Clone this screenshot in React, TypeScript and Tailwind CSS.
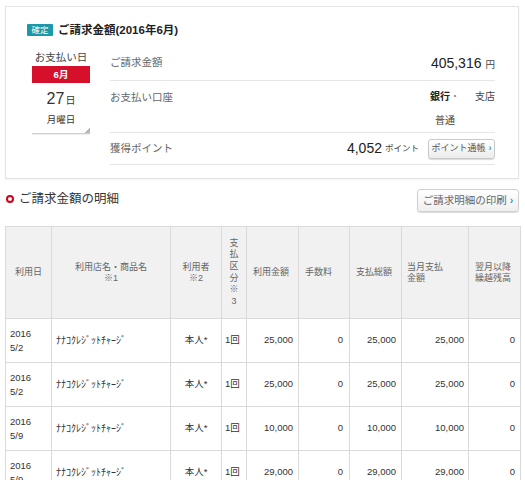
import React from "react";

const rows = [
  { y: "2016", d: "5/2", amt: "25,000" },
  { y: "2016", d: "5/2", amt: "25,000" },
  { y: "2016", d: "5/9", amt: "10,000" },
  { y: "2016", d: "5/9", amt: "29,000" },
];

function Chevron() {
  return <span className="text-[#2aa0b5] font-bold ml-[3px]">›</span>;
}

export default function App() {
  return (
    <div className="w-[525px] h-[480px] overflow-hidden bg-white font-['Liberation_Sans','Noto_Sans_CJK_JP',sans-serif] text-[#333]">
      <div className="pt-[6px] pl-[5px] pr-[5px]">
        {/* summary card */}
        <div className="w-[514px] h-[173px] border border-[#e4e4e4] shadow-[0_1px_2px_rgba(0,0,0,0.05)] pl-[21px] pt-[17px]">
          <div className="flex items-center h-[12px]">
            <span className="bg-[#1c98a8] text-white text-[8.5px] leading-[12px] w-[26px] text-center rounded-[1px]">確定</span>
            <span className="ml-[5px] text-[11.5px] leading-[14px] font-bold text-[#222]">ご請求金額(2016年6月)</span>
          </div>
          <div className="flex mt-[10px]">
            {/* date column */}
            <div className="ml-[5px] w-[58px] flex flex-col">
              <div className="mt-[4px] text-[10.5px] leading-[14px] text-center text-[#444]">お支払い日</div>
              <div className="mt-[2px] h-[17px] bg-[#d60f2b] text-white text-[9.5px] font-bold leading-[17px] text-center">6月</div>
              <div className="mt-[6px] h-[20px] flex items-baseline justify-center text-[#333]">
                <span className="text-[16px] leading-[20px]">27</span>
                <span className="text-[10px] ml-[1px]">日</span>
              </div>
              <div className="mt-[4px] text-[9.5px] leading-[14px] text-center text-[#333]">月曜日</div>
              <div className="relative mt-[3px] h-[4px] border-b border-[#cfcfcf] shadow-[0_1px_1px_rgba(0,0,0,0.08)]">
                <div className="absolute right-0 bottom-0 w-[7px] h-[5px] bg-[linear-gradient(135deg,transparent_50%,#b9b9b9_50%)]" />
              </div>
            </div>
            {/* detail rows */}
            <div className="ml-[20px] w-[385px] flex flex-col">
              <div className="h-[35px] border-b border-[#e6e6e6] flex items-center justify-between">
                <span className="text-[10.5px] text-[#666]">ご請求金額</span>
                <span className="flex items-baseline">
                  <span className="text-[14px] text-[#222]">405,316</span>
                  <span className="text-[9.5px] ml-[4px] text-[#444]">円</span>
                </span>
              </div>
              <div className="h-[52px] border-b border-[#e6e6e6] flex justify-between">
                <span className="pt-[9px] text-[10.5px] leading-[14px] text-[#666]">お支払い口座</span>
                <div className="pt-[9px] grid grid-cols-[40px_30px] text-[10px] leading-[14px]">
                  <span className="text-center font-bold text-[#222]">銀行<span className="font-normal text-[#888]">・</span></span>
                  <span className="text-right text-[#444]">支店</span>
                  <span className="mt-[6px] text-center text-[#444]">普通</span>
                  <span />
                </div>
              </div>
              <div className="h-[32px] border-b border-[#e6e6e6] flex items-center justify-between">
                <span className="text-[10.5px] text-[#666]">獲得ポイント</span>
                <span className="flex items-center">
                  <span className="text-[14px] text-[#222]">4,052</span>
                  <span className="text-[8.5px] ml-[3px] text-[#444]">ポイント</span>
                  <span className="ml-[9px] w-[67px] h-[20px] flex items-center justify-center border border-[#c9c9c9] rounded-[3px] bg-[linear-gradient(#ffffff,#ececec)] shadow-[0_1px_1px_rgba(0,0,0,0.15)] text-[9px] text-[#555]">
                    ポイント通帳<Chevron />
                  </span>
                </span>
              </div>
            </div>
          </div>
        </div>

        {/* section heading */}
        <div className="mt-[10px] flex justify-between items-start">
          <div className="flex items-center h-[20px]">
            <span className="ml-[1px] w-[8px] h-[8px] rounded-full border-2 border-[#d0021b]" />
            <span className="ml-[5px] text-[12.5px] text-[#333]">ご請求金額の明細</span>
          </div>
          <div className="mr-[1px] w-[102px] h-[23px] flex items-center justify-center border border-[#cfcfcf] rounded-[3px] bg-[linear-gradient(#ffffff,#efefef)] shadow-[0_1px_1px_rgba(0,0,0,0.15)] text-[10.5px] text-[#666]">
            ご請求明細の印刷<Chevron />
          </div>
        </div>

        {/* table */}
        <table className="mt-[14px] w-[515px] table-fixed border-collapse text-[9px]">
          <colgroup>
            <col className="w-[46px]" />
            <col className="w-[119px]" />
            <col className="w-[51px]" />
            <col className="w-[25px]" />
            <col className="w-[52px]" />
            <col className="w-[51px]" />
            <col className="w-[52px]" />
            <col className="w-[67px]" />
            <col className="w-[52px]" />
          </colgroup>
          <thead>
            <tr className="h-[92px] bg-[#f1f1f1] text-[#666] leading-[11px]">
              <th className="border border-[#dadada] font-normal text-center">利用日</th>
              <th className="border border-[#dadada] font-normal text-center">利用店名・商品名<br />※1</th>
              <th className="border border-[#dadada] font-normal text-center">利用者<br />※2</th>
              <th className="border border-[#dadada] font-normal text-center">
                <div className="flex flex-col items-center leading-[11.6px]">
                  <span>支</span><span>払</span><span>区</span><span>分</span><span>※</span><span>3</span>
                </div>
              </th>
              <th className="border border-[#dadada] font-normal text-left pl-[6px]">利用金額</th>
              <th className="border border-[#dadada] font-normal text-left pl-[6px]">手数料</th>
              <th className="border border-[#dadada] font-normal text-left pl-[6px]">支払総額</th>
              <th className="border border-[#dadada] font-normal text-left pl-[5px]">当月支払<br />金額</th>
              <th className="border border-[#dadada] font-normal text-left pl-[6px]">翌月以降<br />繰越残高</th>
            </tr>
          </thead>
          <tbody>
            {rows.map((r, i) => (
              <tr key={i} className="h-[44px] text-[#333]">
                <td className="border border-[#dadada] pl-[4px] text-[9.5px] leading-[14px]">{r.y}<br />{r.d}</td>
                <td className="border border-[#dadada] pl-[4px] text-[10px]">ﾅﾅｺｸﾚｼﾞｯﾄﾁｬｰｼﾞ</td>
                <td className="border border-[#dadada] text-center text-[9.5px]">本人*</td>
                <td className="border border-[#dadada] pl-[3px] text-[9.5px]">1回</td>
                <td className="border border-[#dadada] text-right pr-[5px] text-[9.5px]">{r.amt}</td>
                <td className="border border-[#dadada] text-right pr-[6px] text-[9.5px]">0</td>
                <td className="border border-[#dadada] text-right pr-[5px] text-[9.5px]">{r.amt}</td>
                <td className="border border-[#dadada] text-right pr-[4px] text-[9.5px]">{r.amt}</td>
                <td className="border border-[#dadada] text-right pr-[5px] text-[9.5px]">0</td>
              </tr>
            ))}
          </tbody>
        </table>
      </div>
    </div>
  );
}
